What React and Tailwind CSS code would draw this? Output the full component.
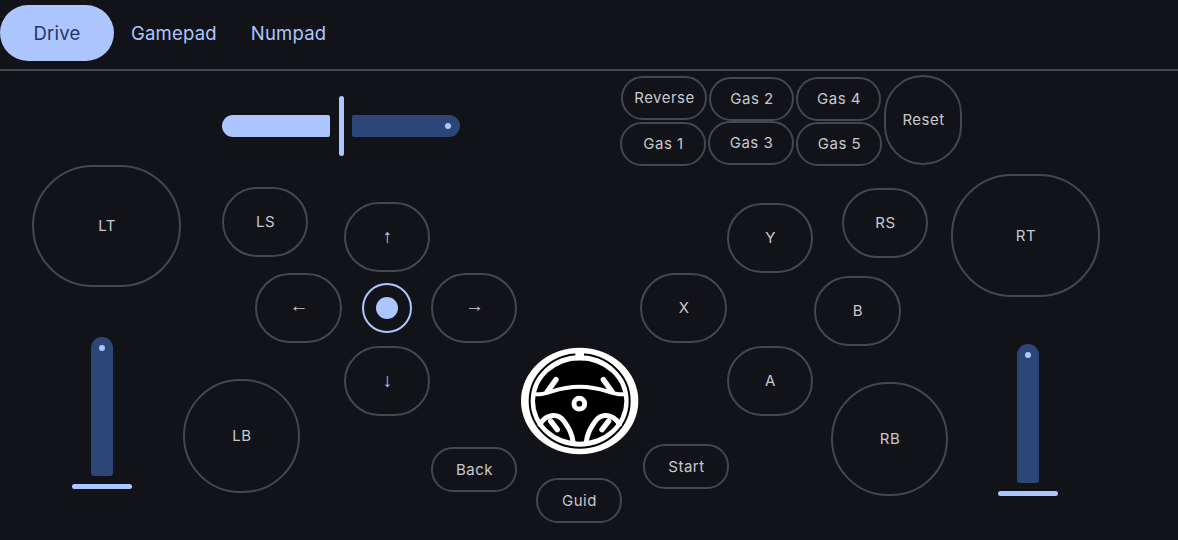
function Btn({ children, cls }) {
  return (
    <div
      className={`flex items-center justify-center pl-[1px] border-2 border-[#44474f] text-[#c8c9cf] text-[15px] tracking-[0.5px] ${cls}`}
    >
      {children}
    </div>
  );
}

// buttons that sit on their own on the canvas
const loose = [
  { label: "LT", cls: "pt-[1px] left-[32px] top-[165px] w-[149px] h-[122px] rounded-[61px]" },
  { label: "LS", cls: "pt-[1px] left-[222px] top-[187px] w-[86px] h-[70px] rounded-[35px]" },
  { label: "LB", cls: "pt-[1px] left-[183px] top-[379px] w-[117px] h-[114px] rounded-[57px]" },
  { label: "Back", cls: "pt-[1px] left-[431px] top-[447px] w-[86px] h-[45px] rounded-[22px]" },
  { label: "Guid", cls: "pt-[1px] left-[536px] top-[478px] w-[86px] h-[45px] rounded-[22px]" },
  { label: "Start", cls: "pt-[1px] left-[643px] top-[444px] w-[86px] h-[45px] rounded-[22px]" },
  { label: "RS", cls: "pt-[1px] left-[842px] top-[188px] w-[86px] h-[70px] rounded-[35px]" },
  { label: "RT", cls: "pt-[1px] left-[951px] top-[174px] w-[149px] h-[123px] rounded-[61px]" },
  { label: "RB", cls: "pt-[1px] left-[831px] top-[382px] w-[117px] h-[114px] rounded-[57px]" },
];

const pad = "pt-[1px] w-[86px] h-[70px] rounded-[35px]";
const pill = "pt-[1px] h-[44px] rounded-[22px]";
const arrowBase = "w-[86px] h-[70px] rounded-[35px] font-['Liberation_Sans',sans-serif] font-bold text-[19px] tracking-normal";

function Wheel() {
  return (
    <svg viewBox="0 0 480 390" className="absolute left-[500px] top-[335px] w-[160px] h-[130px]">
      <ellipse cx="239" cy="198" rx="176" ry="160" fill="#fff" />
      <ellipse cx="239" cy="198" rx="150" ry="140" fill="none" stroke="#000" strokeWidth="6" />
      <ellipse cx="239" cy="198" rx="134" ry="122" fill="#000" />
      <rect x="226" y="48" width="26" height="28" fill="#fff" />
      <g fill="none" stroke="#fff" strokeLinecap="round" strokeLinejoin="round">
        <path d="M108 178 C150 180 165 155 239 155 C313 155 328 180 370 178" strokeWidth="12" />
        <path d="M168 134 L142 170" strokeWidth="16" />
        <path d="M310 134 L336 170" strokeWidth="16" />
        <path d="M120 268 C135 240 172 230 193 260 C208 282 216 295 220 325" strokeWidth="15" />
        <path d="M358 268 C343 240 306 230 285 260 C270 282 262 295 258 325" strokeWidth="15" />
        <path d="M152 258 L172 284" strokeWidth="16" />
        <path d="M326 258 L306 284" strokeWidth="16" />
        <circle cx="238" cy="206" r="16" strokeWidth="15" />
      </g>
    </svg>
  );
}

function VerticalSlider({ cls }) {
  return (
    <div className={`absolute flex flex-col items-center gap-[8px] w-[60px] ${cls}`}>
      <div className="flex justify-center pt-[8px] w-[22px] h-[139px] rounded-t-[11px] rounded-b-[3px] bg-[#2d4678]">
        <div className="w-[6px] h-[6px] rounded-full bg-[#adc6ff]" />
      </div>
      <div className="w-[60px] h-[5px] rounded-full bg-[#adc6ff]" />
    </div>
  );
}

export default function App() {
  return (
    <div className="relative w-full h-screen overflow-hidden bg-[#111318] font-['Inter',sans-serif]">
      <div className="flex items-center h-[69px] pb-[3px]">
        <div className="flex items-center justify-center w-[114px] h-[56px] pt-[2px] rounded-[28px] bg-[#adc6ff] text-[#233660] text-[18.5px] tracking-[0.2px]">
          Drive
        </div>
        <div className="ml-[17px] pt-[2px] text-[#adc6ff] text-[18.5px] tracking-[0.2px]">Gamepad</div>
        <div className="ml-[34px] pt-[2px] text-[#adc6ff] text-[18.5px] tracking-[0.2px]">Numpad</div>
      </div>
      <div className="h-[2px] bg-[#44474f]" />

      {/* steering slider */}
      <div className="absolute left-[222px] top-[96px] flex items-center">
        <div className="w-[108px] h-[22px] rounded-l-[11px] rounded-r-[2px] bg-[#adc6ff]" />
        <div className="ml-[9px] mr-[8px] w-[5px] h-[60px] rounded-full bg-[#adc6ff]" />
        <div className="flex items-center justify-end pr-[9px] w-[108px] h-[22px] rounded-r-[11px] rounded-l-[2px] bg-[#2d4678]">
          <div className="w-[6px] h-[6px] rounded-full bg-[#adc6ff]" />
        </div>
      </div>

      <VerticalSlider cls="left-[72px] top-[337px]" />
      <VerticalSlider cls="left-[998px] top-[344px]" />

      {loose.map((b) => (
        <Btn key={b.label} cls={`absolute ${b.cls}`}>
          {b.label}
        </Btn>
      ))}

      {/* gas block */}
      <div className="absolute left-[620px] top-[75px] flex">
        <div className="flex flex-col gap-[2px] pt-[1px] w-[87px]">
          <Btn cls={`${pill} w-[86px] self-end`}>Reverse</Btn>
          <Btn cls={`${pill} w-[86px]`}>Gas 1</Btn>
        </div>
        <div className="flex flex-col pt-[2px] ml-[1px] w-[86px]">
          <Btn cls={`${pill} w-[85px] self-end`}>Gas 2</Btn>
          <Btn cls={`${pill} w-[86px]`}>Gas 3</Btn>
        </div>
        <div className="flex flex-col gap-[1px] pt-[2px] ml-[2px] w-[86px]">
          <Btn cls={`${pill} w-[85px]`}>Gas 4</Btn>
          <Btn cls={`${pill} w-[86px]`}>Gas 5</Btn>
        </div>
        <Btn cls="pt-[1px] ml-[2px] w-[78px] h-[90px] rounded-[39px]">Reset</Btn>
      </div>

      {/* dpad */}
      <div className="absolute left-[255px] top-[202px] grid grid-cols-[89px_87px_86px] grid-rows-[71px_73px_70px] items-start">
        <div />
        <Btn cls={`${arrowBase} pt-[1px]`}>↑</Btn>
        <div />
        <Btn cls={`${arrowBase} w-[87px] pb-[3px]`}>←</Btn>
        <div className="flex items-center justify-center w-[86px] h-[70px]">
          <div className="flex items-center justify-center w-[50px] h-[50px] rounded-full border-2 border-[#adc6ff]">
            <div className="w-[22px] h-[22px] rounded-full bg-[#adc6ff]" />
          </div>
        </div>
        <Btn cls={`${arrowBase} pb-[3px]`}>→</Btn>
        <div />
        <Btn cls={`${arrowBase} pt-[1px]`}>↓</Btn>
      </div>

      {/* face buttons */}
      <div className="absolute left-[640px] top-[203px] grid grid-cols-[87px_87px_87px] grid-rows-[70px_73px_70px] items-start">
        <div />
        <Btn cls={pad}>Y</Btn>
        <div />
        <Btn cls={`${pad} w-[87px]`}>X</Btn>
        <div />
        <Btn cls={`${pad} w-[87px] mt-[3px]`}>B</Btn>
        <div />
        <Btn cls={pad}>A</Btn>
      </div>

      <Wheel />
    </div>
  );
}
